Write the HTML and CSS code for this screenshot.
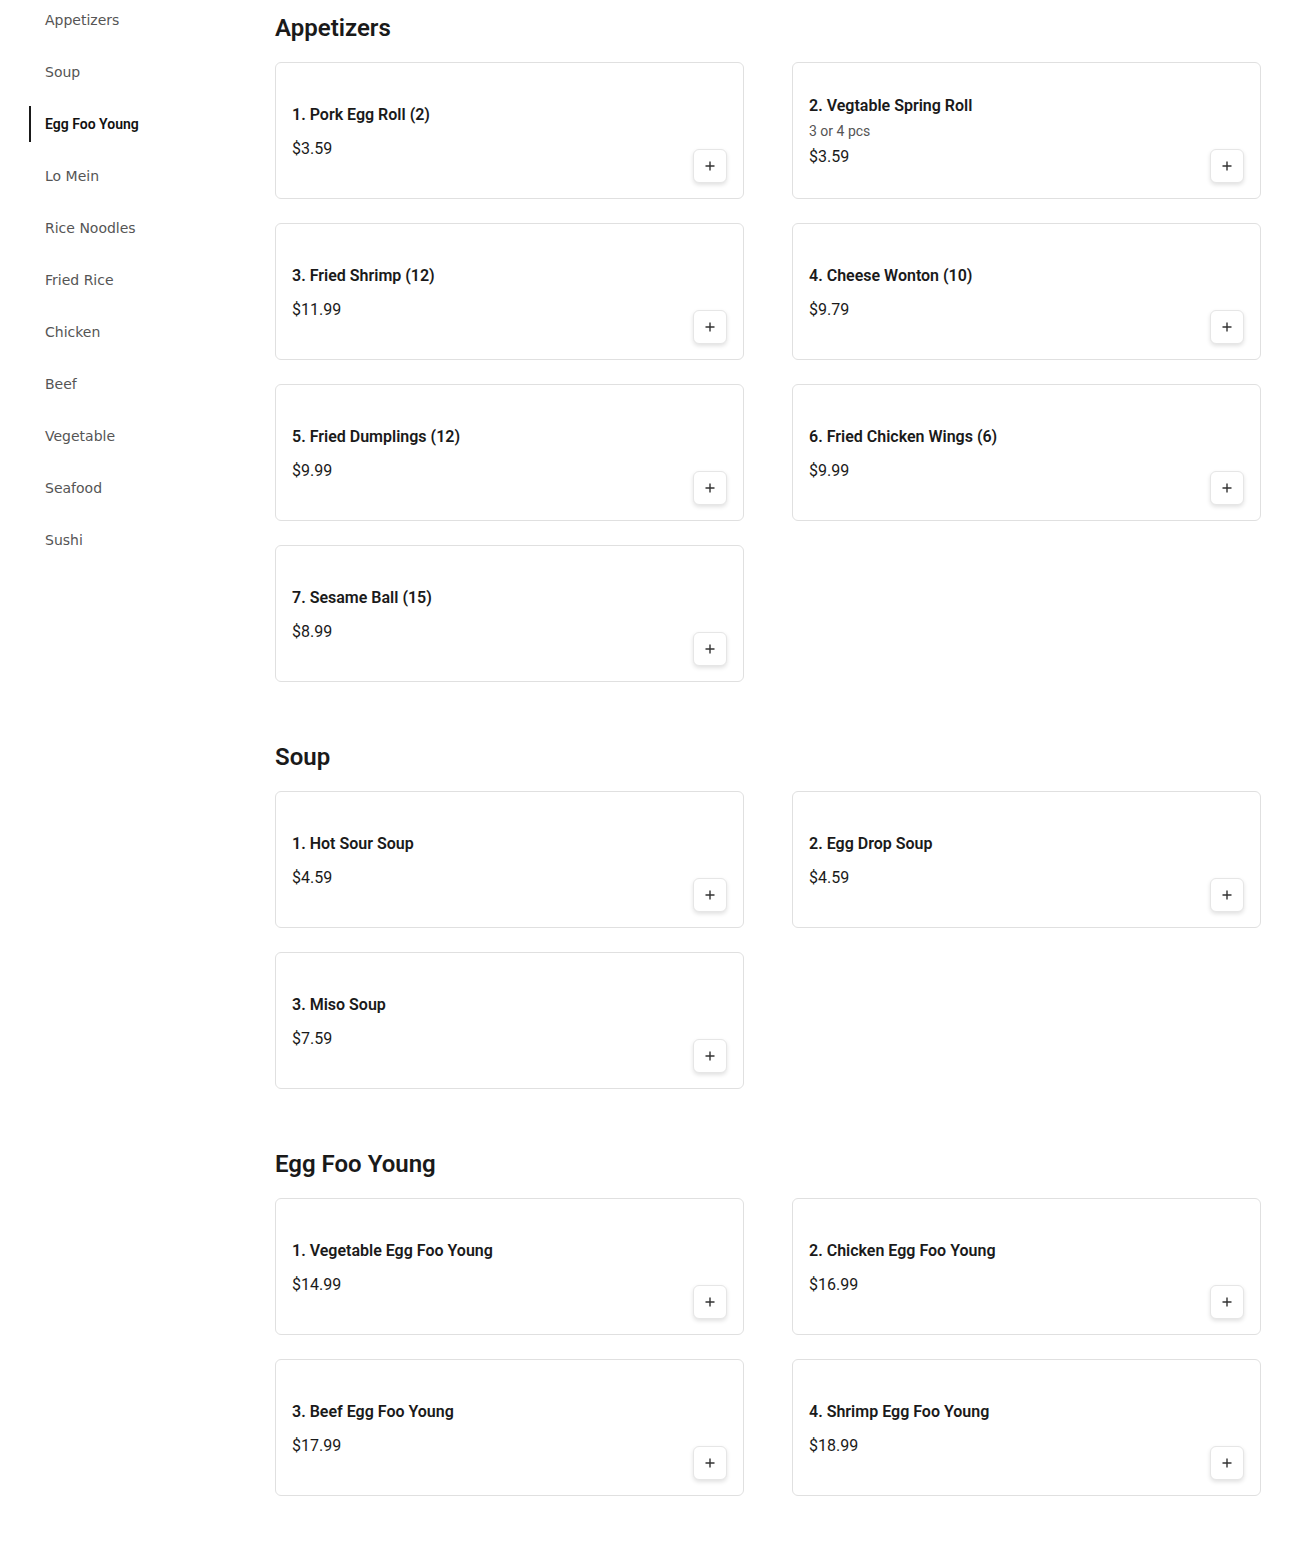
FILE: index.html
```html
<!DOCTYPE html>
<html lang="en">
<head>
<meta charset="utf-8">
<title>Menu</title>
<link rel="stylesheet" href="styles.css">
</head>
<body>
<div class="page">
  <nav class="sidebar">
    <a class="nav-item">Appetizers</a>
    <a class="nav-item">Soup</a>
    <a class="nav-item active">Egg Foo Young</a>
    <a class="nav-item">Lo Mein</a>
    <a class="nav-item">Rice Noodles</a>
    <a class="nav-item">Fried Rice</a>
    <a class="nav-item">Chicken</a>
    <a class="nav-item">Beef</a>
    <a class="nav-item">Vegetable</a>
    <a class="nav-item">Seafood</a>
    <a class="nav-item">Sushi</a>
  </nav>
  <main class="main">
    <section class="section">
      <h2 class="section-title">Appetizers</h2>
      <div class="grid">
        <div class="card"><div class="info"><div class="title">1. Pork Egg Roll (2)</div><div class="price">$3.59</div></div><button class="add"><svg viewBox="0 0 12 12" width="12" height="12"><path d="M6 1.5v9M1.5 6h9" stroke="#333" stroke-width="1.4"/></svg></button></div>
        <div class="card"><div class="info"><div class="title">2. Vegtable Spring Roll</div><div class="desc">3 or 4 pcs</div><div class="price">$3.59</div></div><button class="add"><svg viewBox="0 0 12 12" width="12" height="12"><path d="M6 1.5v9M1.5 6h9" stroke="#333" stroke-width="1.4"/></svg></button></div>
        <div class="card"><div class="info"><div class="title">3. Fried Shrimp (12)</div><div class="price">$11.99</div></div><button class="add"><svg viewBox="0 0 12 12" width="12" height="12"><path d="M6 1.5v9M1.5 6h9" stroke="#333" stroke-width="1.4"/></svg></button></div>
        <div class="card"><div class="info"><div class="title">4. Cheese Wonton (10)</div><div class="price">$9.79</div></div><button class="add"><svg viewBox="0 0 12 12" width="12" height="12"><path d="M6 1.5v9M1.5 6h9" stroke="#333" stroke-width="1.4"/></svg></button></div>
        <div class="card"><div class="info"><div class="title">5. Fried Dumplings (12)</div><div class="price">$9.99</div></div><button class="add"><svg viewBox="0 0 12 12" width="12" height="12"><path d="M6 1.5v9M1.5 6h9" stroke="#333" stroke-width="1.4"/></svg></button></div>
        <div class="card"><div class="info"><div class="title">6. Fried Chicken Wings (6)</div><div class="price">$9.99</div></div><button class="add"><svg viewBox="0 0 12 12" width="12" height="12"><path d="M6 1.5v9M1.5 6h9" stroke="#333" stroke-width="1.4"/></svg></button></div>
        <div class="card"><div class="info"><div class="title">7. Sesame Ball (15)</div><div class="price">$8.99</div></div><button class="add"><svg viewBox="0 0 12 12" width="12" height="12"><path d="M6 1.5v9M1.5 6h9" stroke="#333" stroke-width="1.4"/></svg></button></div>
      </div>
    </section>
    <section class="section">
      <h2 class="section-title">Soup</h2>
      <div class="grid">
        <div class="card"><div class="info"><div class="title">1. Hot Sour Soup</div><div class="price">$4.59</div></div><button class="add"><svg viewBox="0 0 12 12" width="12" height="12"><path d="M6 1.5v9M1.5 6h9" stroke="#333" stroke-width="1.4"/></svg></button></div>
        <div class="card"><div class="info"><div class="title">2. Egg Drop Soup</div><div class="price">$4.59</div></div><button class="add"><svg viewBox="0 0 12 12" width="12" height="12"><path d="M6 1.5v9M1.5 6h9" stroke="#333" stroke-width="1.4"/></svg></button></div>
        <div class="card"><div class="info"><div class="title">3. Miso Soup</div><div class="price">$7.59</div></div><button class="add"><svg viewBox="0 0 12 12" width="12" height="12"><path d="M6 1.5v9M1.5 6h9" stroke="#333" stroke-width="1.4"/></svg></button></div>
      </div>
    </section>
    <section class="section">
      <h2 class="section-title">Egg Foo Young</h2>
      <div class="grid">
        <div class="card"><div class="info"><div class="title">1. Vegetable Egg Foo Young</div><div class="price">$14.99</div></div><button class="add"><svg viewBox="0 0 12 12" width="12" height="12"><path d="M6 1.5v9M1.5 6h9" stroke="#333" stroke-width="1.4"/></svg></button></div>
        <div class="card"><div class="info"><div class="title">2. Chicken Egg Foo Young</div><div class="price">$16.99</div></div><button class="add"><svg viewBox="0 0 12 12" width="12" height="12"><path d="M6 1.5v9M1.5 6h9" stroke="#333" stroke-width="1.4"/></svg></button></div>
        <div class="card"><div class="info"><div class="title">3. Beef Egg Foo Young</div><div class="price">$17.99</div></div><button class="add"><svg viewBox="0 0 12 12" width="12" height="12"><path d="M6 1.5v9M1.5 6h9" stroke="#333" stroke-width="1.4"/></svg></button></div>
        <div class="card"><div class="info"><div class="title">4. Shrimp Egg Foo Young</div><div class="price">$18.99</div></div><button class="add"><svg viewBox="0 0 12 12" width="12" height="12"><path d="M6 1.5v9M1.5 6h9" stroke="#333" stroke-width="1.4"/></svg></button></div>
      </div>
    </section>
  </main>
</div>
</body>
</html>
```
FILE: styles.css
```css
* { box-sizing: border-box; }
html, body { margin: 0; padding: 0; background: #fff; }
body { font-family: Roboto, "Liberation Sans", sans-serif; color: #1a1a1a; }

.page {
  display: grid;
  grid-template-columns: 200px 1fr;
  column-gap: 46px;
  padding: 0 29px 64px 29px;
}

.sidebar {
  display: flex;
  flex-direction: column;
  gap: 16px;
  padding-top: 2px;
}
.nav-item {
  display: flex;
  align-items: center;
  height: 36px;
  padding-left: 14px;
  font-family: "DejaVu Sans", sans-serif;
  font-size: 14px;
  color: #555;
  border-left: 2px solid transparent;
}
.nav-item.active {
  border-left-color: #1a1a1a;
  font-family: Roboto, sans-serif;
  font-weight: 600;
  color: #111;
}

.main { display: flex; flex-direction: column; gap: 47px; }
.section { padding-top: 12px; }
.section-title {
  margin: 0 0 18px 0;
  font-size: 24px;
  line-height: 32px;
  font-weight: 600;
  color: #1a1a1a;
}
.grid {
  display: grid;
  grid-template-columns: 1fr 1fr;
  column-gap: 48px;
  row-gap: 24px;
}
.card {
  height: 137px;
  border: 1px solid #e0e0e0;
  border-radius: 6px;
  padding: 16px;
  display: flex;
  justify-content: space-between;
}
.info { align-self: center; margin-top: 2px; }
.title {
  font-size: 16px;
  line-height: 24px;
  font-weight: 600;
  color: #1a1a1a;
  margin-bottom: 10px;
}
.desc {
  font-size: 14px;
  line-height: 20px;
  color: #555;
  margin-top: -7px;
  margin-bottom: 4px;
}
.price {
  font-size: 16px;
  line-height: 24px;
  color: #1a1a1a;
}
.add {
  align-self: flex-end;
  width: 34px;
  height: 34px;
  flex: none;
  border: 1px solid #e6e6e6;
  border-radius: 6px;
  background: #fff;
  box-shadow: 0 2px 4px rgba(0,0,0,0.12);
  display: flex;
  align-items: center;
  justify-content: center;
  padding: 0;
  margin-bottom: -1px;
}
.add svg { display: block; }
```
